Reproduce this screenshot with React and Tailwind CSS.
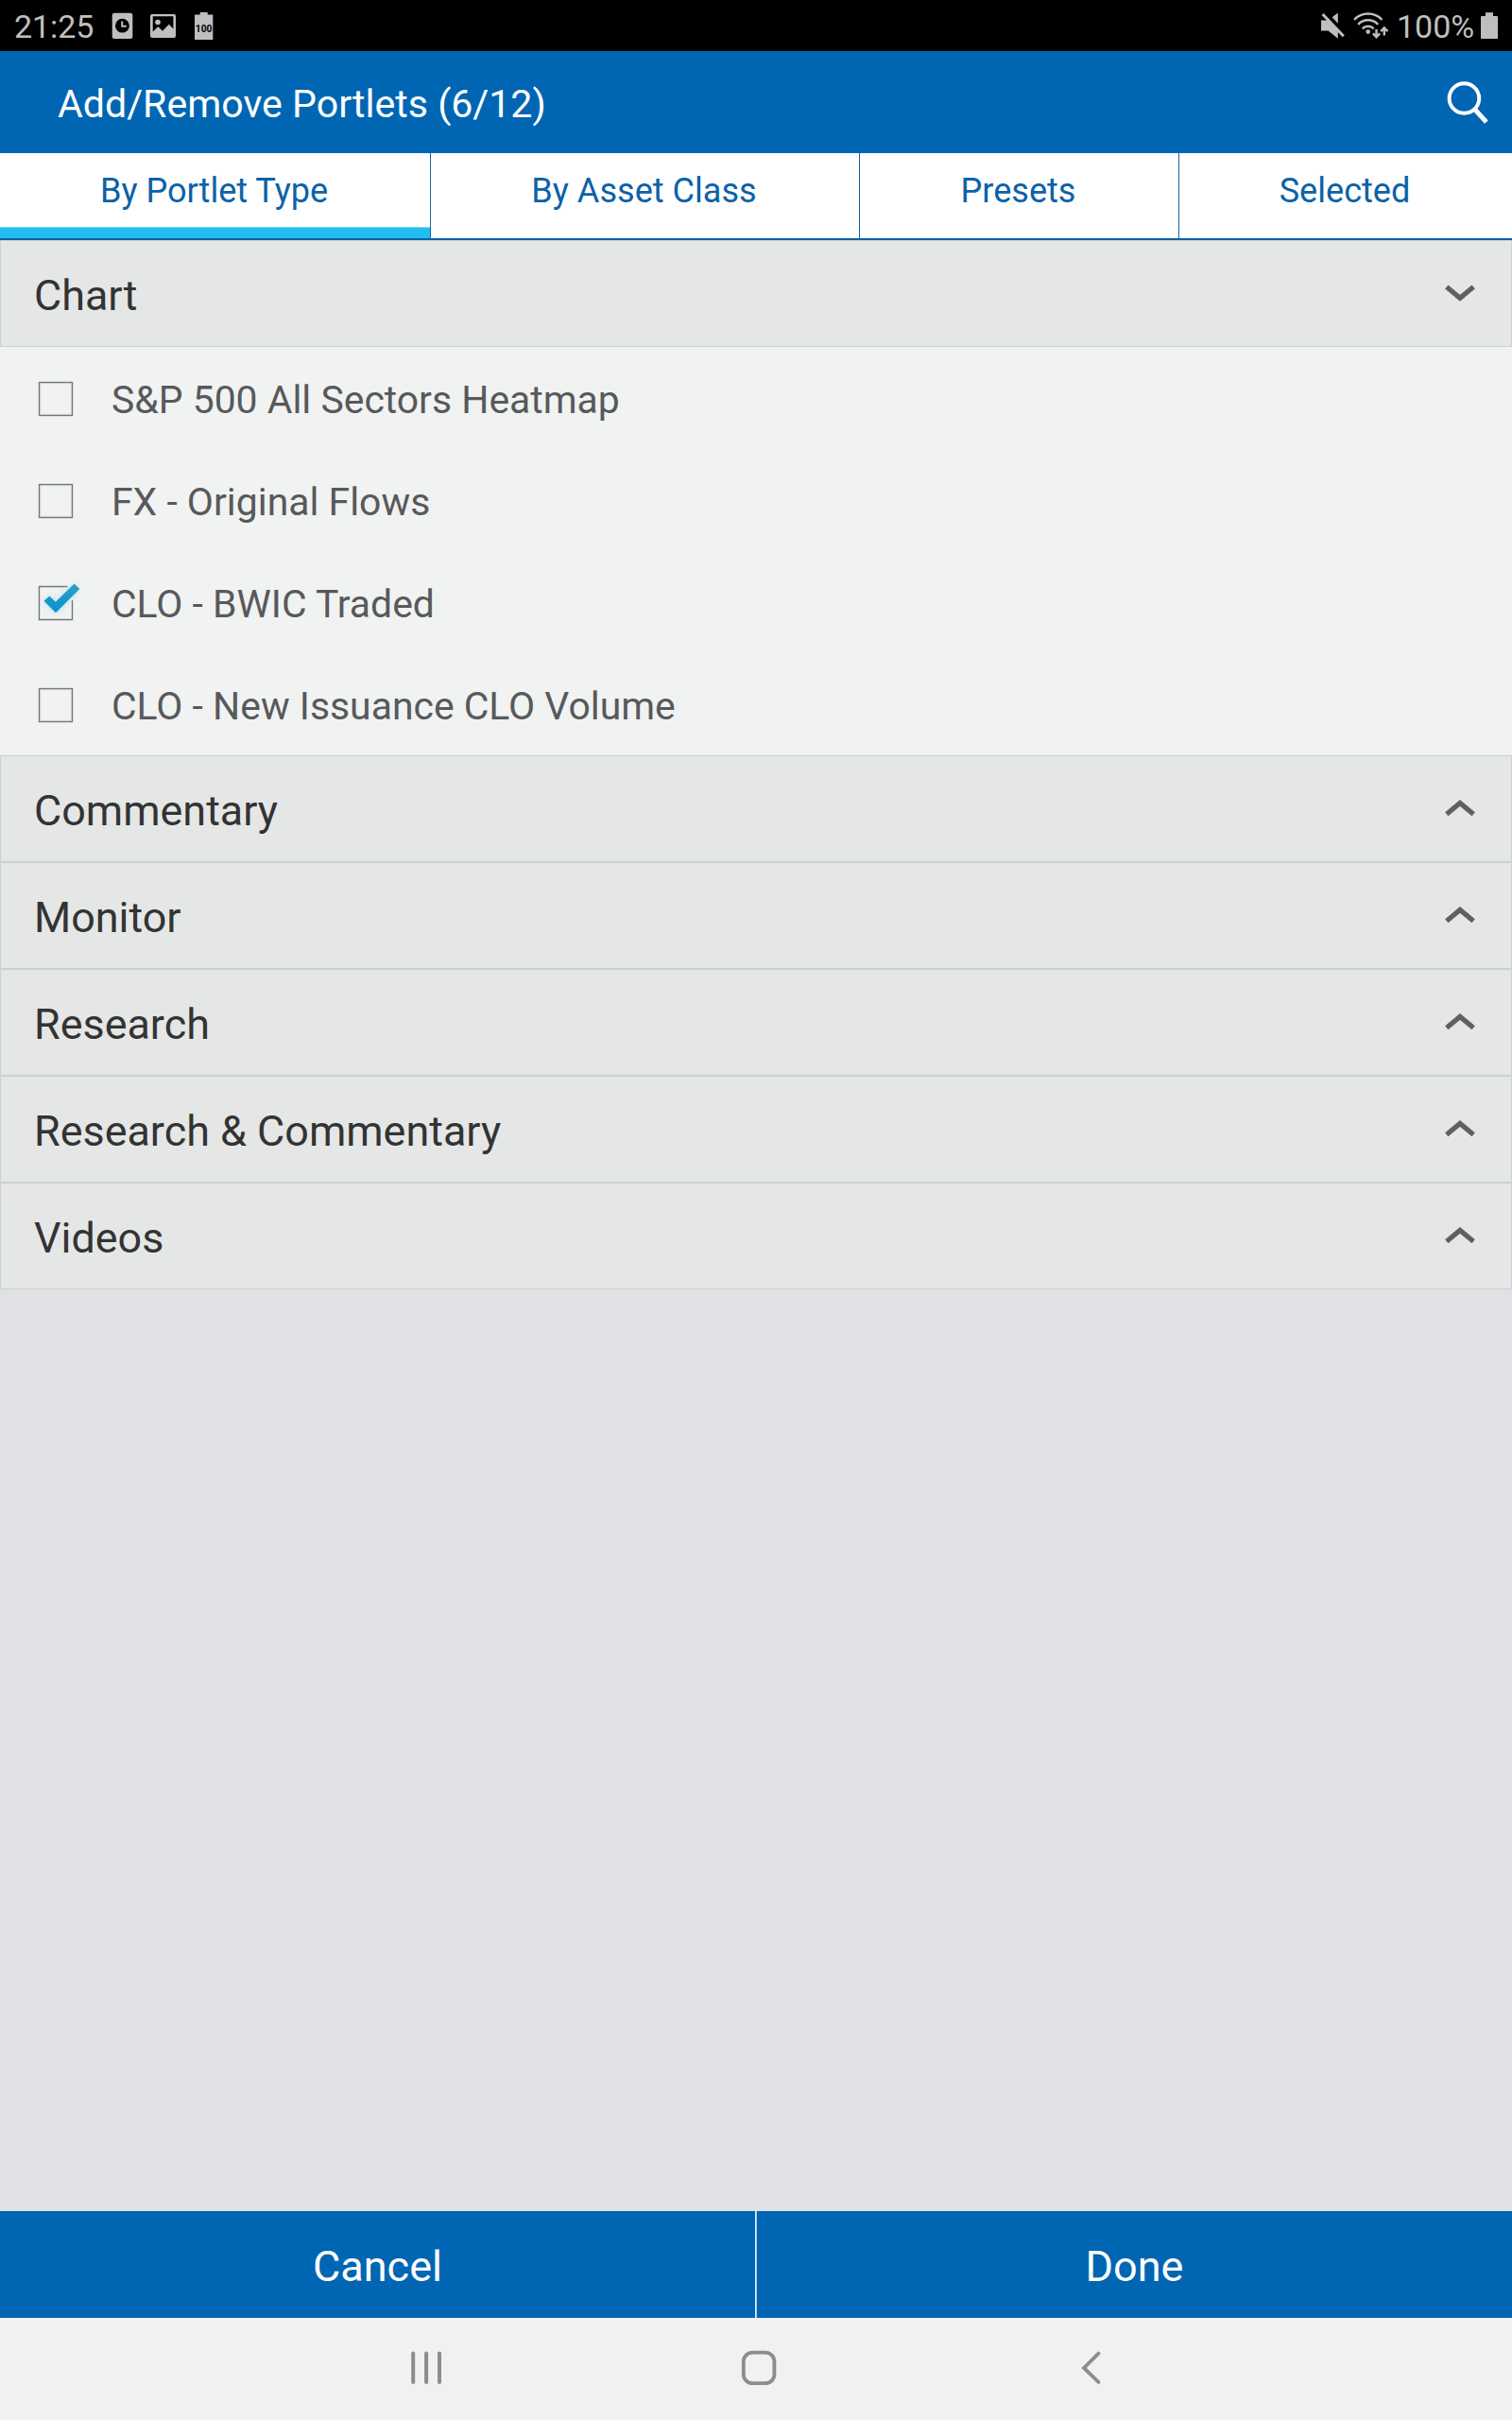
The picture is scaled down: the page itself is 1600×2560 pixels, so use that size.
import React from "react";

const tabs = [
  { label: "By Portlet Type", width: "w-[456px]", active: true },
  { label: "By Asset Class", width: "w-[454px]" },
  { label: "Presets", width: "w-[338px]" },
  { label: "Selected", width: "w-[352px]" },
];

const charts = [
  { label: "S&P 500 All Sectors Heatmap" },
  { label: "FX - Original Flows" },
  { label: "CLO - BWIC Traded", checked: true },
  { label: "CLO - New Issuance CLO Volume" },
];

const sections = ["Commentary", "Monitor", "Research", "Research & Commentary", "Videos"];

function StatusBar() {
  return (
    <div className="flex h-[54px] items-center justify-between bg-black text-[34px] leading-[54px] text-[#bfbfbf]">
      <div className="flex items-center">
        <span className="w-[103px] pt-px pl-[15px] tracking-[-0.1px]">21:25</span>
        <svg className="h-[54px] w-[137px]" viewBox="103 0 137 54" fill="currentColor">
          <rect x="118.7" y="13.8" width="21.6" height="27.2" rx="2.5" />
          <circle cx="129.4" cy="27.2" r="7.4" fill="#000" />
          <path d="M129.2 22.5v5.2h4.6" fill="none" stroke="currentColor" strokeWidth="2" />
          <path
            fillRule="evenodd"
            d="M161 15h23a2 2 0 0 1 2 2v21a2 2 0 0 1-2 2h-23a2 2 0 0 1-2-2V17a2 2 0 0 1 2-2ZM161.7 17.3V33.5l5.6-5.3 4.7 4.5 6.8-7 4.6 4.8V17.3Z"
          />
          <circle cx="167" cy="23.5" r="2.8" />
          <path d="M206 15.4h5.7V13h8v2.4h5.6V42H206Z" />
          <text x="215.6" y="33.6" textAnchor="middle" fontSize="11.8" fontWeight="700" fill="#000" textLength="17.6" lengthAdjust="spacingAndGlyphs">
            100
          </text>
        </svg>
      </div>
      <div className="flex items-center">
        <svg className="h-[54px] w-[87px]" viewBox="1390 0 87 54" fill="currentColor">
          <path d="M1398 21.5h7.5L1415.8 13.5V40.8L1405.5 32.5H1398Z" />
          <path d="M1397.8 9.6L1425 37.9" stroke="#000" strokeWidth="5" />
          <path d="M1399.6 15L1421.8 38.2" stroke="currentColor" strokeWidth="3" />
          <g fill="none" stroke="currentColor" strokeWidth="2.5">
            <path d="M1433 20.8a20.5 20.5 0 0 1 29.4 0" />
            <path d="M1437.2 25.8a14.5 14.5 0 0 1 21 0" />
            <path d="M1441.7 30.3a8.6 8.6 0 0 1 12 0" />
            <path d="M1456.5 31V39M1452.9 35.4l3.6 3.8 3.6-3.8M1464.8 37.6V29.6M1461.2 33.2l3.6-3.8 3.6 3.8" strokeWidth="2.4" />
          </g>
          <circle cx="1447.7" cy="33.6" r="2.3" />
        </svg>
        <span className="w-[90px] pt-px pl-px">100%</span>
        <svg className="h-[54px] w-[33px]" viewBox="1567 0 33 54" fill="currentColor">
          <path d="M1568 17h4v-3.8h8V17h4a1 1 0 0 1 1 1v22a1 1 0 0 1-1 1h-16a1 1 0 0 1-1-1V18a1 1 0 0 1 1-1Z" />
        </svg>
      </div>
    </div>
  );
}

function SectionHeader({ label, open }) {
  return (
    <div className="flex h-[113px] items-center justify-between border border-[#cdd0d1] bg-[#e5e7e6] pr-[37px] pl-[35px] text-[44.9px] text-[#333333]">
      <span className="pt-1">{label}</span>
      <svg className="h-[111px] w-[34px]" viewBox="0 0 34 111" fill="none" stroke="#5f6062" strokeWidth="5.2">
        <path d={open ? "M2.8 48.5L17 60.3L31.2 48.5" : "M2.8 61.3L17 49.5L31.2 61.3"} />
      </svg>
    </div>
  );
}

function CheckBox({ checked }) {
  return (
    <svg className="mr-9 h-[54px] w-[54px]" viewBox="32 394 54 54" fill="none">
      {checked ? (
        <>
          <defs>
            <filter id="glow" x="-50%" y="-50%" width="200%" height="200%">
              <feGaussianBlur stdDeviation="3.2" />
            </filter>
            <linearGradient id="tick" x1="0" y1="0" x2="0" y2="1">
              <stop offset="0" stopColor="#2b9fc9" />
              <stop offset="1" stopColor="#0a93c8" />
            </linearGradient>
          </defs>
          <path d="M71.5 404.5H41.5V439.5H76.5V419" stroke="#737674" strokeWidth="1.4" />
          <path d="M46.5 420L52.3 414.6L58.8 421.2L78 402.5L83.8 407.5L59 432Z" fill="#a5dcf5" filter="url(#glow)" />
          <path d="M46.5 419.8L52.3 414.4L58.8 420.8L78.6 401.6L84.2 406.9L59 432.3Z" fill="url(#tick)" />
        </>
      ) : (
        <>
          <rect x="42.6" y="405.6" width="32.8" height="32.8" stroke="#dcdfdd" strokeWidth="1.3" />
          <rect x="41.5" y="404.5" width="35" height="35" stroke="#737674" strokeWidth="1.3" />
        </>
      )}
    </svg>
  );
}

export default function App() {
  return (
    <div className="flex h-[2560px] w-[1600px] flex-col overflow-hidden bg-[#dfe1e5] font-[Roboto,sans-serif]">
      <StatusBar />

      <header className="flex h-[108px] items-center justify-between bg-[#0066b3] pr-[22px] pl-[61px] text-white">
        <h1 className="pt-[6px] text-[41.1px]">Add/Remove Portlets (6/12)</h1>
        <svg className="h-[54px] w-[54px]" viewBox="1524 81 54 54" fill="none" stroke="currentColor">
          <circle cx="1549.4" cy="104" r="15.8" strokeWidth="3.9" />
          <path d="M1560 115L1572.9 129.1" strokeWidth="5" />
        </svg>
      </header>

      <nav className="flex h-[92px] border-b-2 border-[#0c62a7] bg-white text-[36.1px] leading-[80px] text-[#0c62a7]">
        {tabs.map((tab, i) => (
          <div
            key={tab.label}
            className={`${tab.width} flex flex-col justify-between text-center ${i < tabs.length - 1 ? "border-r border-[#1b659e]" : ""}`}
          >
            <span className="h-[78px] pr-[2px]">{tab.label}</span>
            {tab.active && <span className="h-3 border-t border-[#7fdaf6] bg-[#22bdef]" />}
          </div>
        ))}
      </nav>

      <SectionHeader label="Chart" open />
      <ul className="bg-[#f0f3f2] text-[40.9px] text-[#58595b]">
        {charts.map((item) => (
          <li key={item.label} className="flex h-[108px] items-center pl-8">
            <CheckBox checked={item.checked} />
            <span className="-ml-1 pt-[6px]">{item.label}</span>
          </li>
        ))}
      </ul>
      {sections.map((label) => (
        <SectionHeader key={label} label={label} />
      ))}

      <footer className="mt-auto">
        <div className="flex h-[113px] bg-[#0066b3] text-[45px] text-white">
          <button className="flex flex-1 items-center justify-center border-r border-[#dcebf7] pt-1">Cancel</button>
          <button className="flex flex-1 items-center justify-center border-l border-[#a9cce8] pt-1">Done</button>
        </div>
        <div className="flex h-[108px] items-center justify-center gap-[298px] bg-[#f1f1f1] pb-[2px] pl-[6px] text-[#8c8c8c]">
          <svg className="h-[54px] w-[54px]" viewBox="424 2478 54 54" fill="none" stroke="currentColor" strokeWidth="4" strokeLinecap="round">
            <path d="M437.2 2489.6V2520M451.1 2489.6V2520M465 2489.6V2520" />
          </svg>
          <svg className="h-[54px] w-[54px]" viewBox="776 2478 54 54" fill="none" stroke="currentColor" strokeWidth="3.8">
            <rect x="786.8" y="2488.6" width="32.6" height="32.6" rx="9.5" />
          </svg>
          <svg className="h-[54px] w-[54px]" viewBox="1128 2478 54 54" fill="none" stroke="currentColor" strokeWidth="3.8" strokeLinecap="round">
            <path d="M1162.5 2489.6L1147 2504.9L1162.5 2520" />
          </svg>
        </div>
      </footer>
    </div>
  );
}
